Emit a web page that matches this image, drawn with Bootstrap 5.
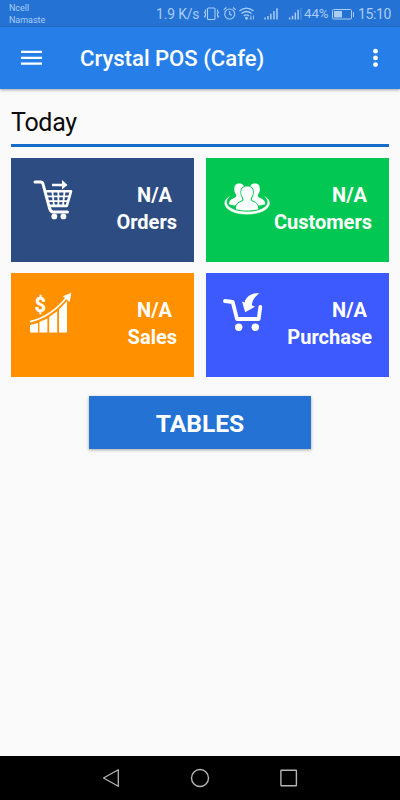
<!DOCTYPE html>
<html lang="en">
<head>
<meta charset="utf-8">
<meta name="viewport" content="width=device-width, initial-scale=1">
<title>Crystal POS (Cafe)</title>
<link href="https://cdn.jsdelivr.net/npm/bootstrap@5.3.0/dist/css/bootstrap.min.css" rel="stylesheet">
<style>
body{font-family:Roboto,"Liberation Sans",sans-serif;background:#fafafa;height:800px;overflow:hidden}
svg{display:block;flex:none}
.status{height:27px;background:#2472d3;color:#a9cdf5;padding-left:9px;white-space:nowrap}
.carrier{font-size:9px;line-height:12px;width:147px;padding-top:2px;letter-spacing:-.05px}
.rate{font-size:13.8px;width:47px;padding-top:1px;letter-spacing:-.1px}
.pct{font-size:13.4px;width:28px;padding-top:1px;letter-spacing:-.1px}
.clock{font-size:14px;padding-top:1px;letter-spacing:-.4px}
.appbar{height:62px;background:#267fe9;box-shadow:0 1px 3px rgba(0,0,0,.35);padding:0 18px 0 21px}
.apptitle{font-size:22.1px;font-weight:500;margin-left:38px;padding-top:1px;color:#fff;line-height:31px}
.content{padding:0 11px}
.heading{font-size:25px;letter-spacing:-.3px;line-height:30px;color:#0b0b0b;margin-top:19px;height:36px}
.rule{height:3px;background:#146bc9}
.tiles{display:grid;grid-template-columns:183px 183px;gap:11px 12px;margin-top:11px}
.tile{height:104px;color:#fff;font-size:20px;line-height:27px;font-weight:700;padding:24px 17px 0 17px}
.orders{background:#2d4d82}.customers{background:#02c853}.sales{background:#ff9100}.purchase{background:#3d5afe}
.value{padding-right:5px}
.tables{width:222px;height:53px;background:#2472d3;color:#fff;font-size:24.6px;line-height:36px;font-weight:700;margin-top:19px;box-shadow:0 1px 3px rgba(0,0,0,.35)}
.tables span{display:block;padding-top:2px}
.sysbar{height:44px;background:#000;padding:0 101px 0 101px}
</style>
<script src="https://cdn.jsdelivr.net/npm/bootstrap@5.3.0/dist/js/bootstrap.bundle.min.js"></script>
</head>
<body class="d-flex flex-column">
<div class="status d-flex align-items-center">
  <div class="carrier align-self-start">Ncell<br>Namaste</div>
  <span class="rate">1.9 K/s</span>
  <svg width="19" height="16" fill="none" stroke="#a9cdf5" stroke-width="1.1"><rect x="4.5" y="2" width="7.5" height="11.5" rx="1"/><path d="M2.500 3.500v2l-1 1 1 1v2l-1 1 1 1M14.500 3.500v2l1 1-1 1v2l1 1-1 1"/></svg>
  <svg width="17" height="16" fill="none" stroke="#a9cdf5" stroke-width="1.1"><circle cx="7.700" cy="8" r="5"/><path d="M7.700 5v3.300l2.200 1M1.700 3.900 4.400 1.500M11 1.500l2.700 2.400"/></svg>
  <svg width="25" height="16" fill="none" stroke="#a9cdf5" stroke-width="1.300"><path d="M.3 5Q7.500-.7 14.500 5M2.500 7.500Q7.500 3.500 12.500 7.500M4.700 9.900Q7.500 7.700 10.100 9.900"/><circle cx="7.500" cy="12.300" r=".8" fill="#a9cdf5"/><path d="M12 9.500v4M10.800 12.100l1.200 1.400M14.500 13.500v-4" stroke-width=".9"/></svg>
  <svg width="24" height="16" fill="#a9cdf5"><path d="M.3 11.500h1.500v2H.3zM3.200 10h1.500v3.500H3.200zM6.100 7.700h1.500v5.800H6.100zM9.200 4.900h1.500v8.600H9.200zM12.200 2.300h1.500v11.200h-1.500z"/></svg>
  <svg width="16" height="16" fill="#a9cdf5"><path d="M.9 11.500h1.500v2H.9zM3.800 9.700h1.500v3.800H3.800zM6.600 6.500h1.500v7H6.600zM9.400 3.800h1.500v9.700H9.400z"/><path opacity=".35" d="M12.300 2h1.200v11.500h-1.200z"/></svg>
  <span class="pct">44%</span>
  <svg width="26" height="16" fill="none" stroke="#a9cdf5" stroke-width="1"><rect x=".5" y="3.500" width="19" height="9.500" rx="1"/><path d="M2 5h8v6.500H2z" fill="#a9cdf5" stroke="none"/><path d="M21.500 6v5"/></svg>
  <span class="clock">15:10</span>
</div>
<nav class="appbar d-flex align-items-center">
  <svg width="21" height="16" fill="#fff"><path d="M0 .700h21v2.300H0zM0 6.700h21v2.300H0zM0 12.500h21v2.300H0z"/></svg>
  <div class="apptitle me-auto">Crystal POS (Cafe)</div>
  <svg width="12" height="20" fill="#fff"><circle cx="5.500" cy="3.200" r="2.400"/><circle cx="5.500" cy="9.900" r="2.400"/><circle cx="5.500" cy="16.600" r="2.400"/></svg>
</nav>
<main class="content flex-grow-1">
  <h1 class="heading fw-normal mb-0">Today</h1>
  <div class="rule"></div>
  <div class="tiles">
    <div class="tile orders d-flex justify-content-between">
      <svg width="46" height="46" viewBox="28 182 46 46" overflow="visible" fill="none" stroke="#fff" stroke-width="3" stroke-linecap="round" stroke-linejoin="round"><path d="M35 182h5.700q1.800 0 2.300 2l6.700 24.800q1 3.200 3.600 3.200H67.500"/><path d="M45.300 191.300H71l-4.200 14.600H50" stroke-width="2.600"/><path d="M47 196.300h22M48.500 201.200h19M52.400 191.500l1.500 14M58.400 191.500v14M64.500 191.500l-1.500 14" stroke-width="1.800"/><path d="M52 183.700h10V180l5.500 4.900-5.500 4.700v-3.400H52z" fill="#fff" stroke="none"/><g fill="#fff" stroke="none"><circle cx="54.300" cy="216.400" r="2.900"/><circle cx="63.400" cy="216.400" r="2.900"/></g></svg>
      <div class="text-end"><div class="value">N/A</div><div>Orders</div></div>
    </div>
    <div class="tile customers d-flex justify-content-between">
      <svg width="48" height="46" viewBox="223 182 48 46" overflow="visible" fill="#fff"><path d="M229.500 196.500c-3 1.800-4.800 4-4.800 6.700 0 6.200 9.700 11 22.400 11s22.400-4.800 22.400-11c0-2.700-1.800-4.900-4.800-6.700 2 1.800 3 3.500 3 5.500 0 5.700-9 9.700-20.600 9.700s-20.600-4-20.600-9.700c0-2 1-3.700 3-5.500z" stroke="#fff" stroke-width=".4"/><path d="M229 204.300c0-3.300 1.200-4.800 4-5.900 2.300-.9 3.500-1.500 3.300-3-.2-1.400-2-2.600-2-6.400s1.800-5.500 5-5.500 5 1.700 5 5.500-1.500 5-2 6.400V205c-4.500.8-9.800.7-13.300-.7z"/><path d="M265.200 204.300c0-3.300-1.200-4.800-4-5.900-2.300-.9-3.500-1.500-3.300-3 .2-1.400 2-2.600 2-6.400s-1.800-5.500-5-5.500-5 1.700-5 5.500 1.500 5 2 6.400V205c4.500.8 9.800.7 13.300-.7z"/><path d="M235.900 209.200c0-4.300 1.800-6.200 5.300-7.500 2-.8 2.400-1.500 2.200-2.800-.3-1.700-2.200-2.700-2.200-6.800 0-3.600 2.200-5.500 5.900-5.500s5.900 1.900 5.900 5.500c0 4.100-1.900 5.100-2.200 6.800-.2 1.300.2 2 2.200 2.800 3.500 1.300 5.300 3.200 5.300 7.500-5.600 1.700-16.800 1.700-22.400 0z" stroke="#02c853" stroke-width="1.800" paint-order="stroke"/></svg>
      <div class="text-end"><div class="value">N/A</div><div>Customers</div></div>
    </div>
    <div class="tile sales d-flex justify-content-between">
      <svg width="46" height="46" viewBox="28 297 46 46" overflow="visible" fill="#fff"><path d="M30 325l8-2v9.500h-8zM39.400 322l8-3.600v14.100h-8zM49.200 317l8-5.700v21.200h-8zM59 309.400l8-8.500v31.600h-8z"/><path d="M30 321.700C44 318.500 56 310.600 67 297" fill="none" stroke="#fff" stroke-width="1.700"/><path d="M71.300 292.800l-8.300 3.500 6.700 6z"/><text x="40.300" y="311.800" text-anchor="middle" font-size="19.500" font-family="Roboto, sans-serif" font-weight="700" stroke="#fff" stroke-width=".3">$</text></svg>
      <div class="text-end"><div class="value">N/A</div><div>Sales</div></div>
    </div>
    <div class="tile purchase d-flex justify-content-between">
      <svg width="46" height="46" viewBox="223 297 46 46" overflow="visible" fill="none" stroke="#fff" stroke-width="3.800" stroke-linecap="round" stroke-linejoin="round"><path d="M225 301l7.700 1 4.300 17h21.700l1.600-12"/><g fill="#fff" stroke="none"><circle cx="238.700" cy="327.300" r="3.700"/><circle cx="255.300" cy="327.300" r="3.700"/><path d="M259.500 293.200c-7.500-.3-13 2.500-15 9.200l-2.500-1 3.200 10.900 9.800-5.600-3.200-1.400c.5-5.300 3-8.500 7.700-12.100z"/></g></svg>
      <div class="text-end"><div class="value">N/A</div><div>Purchase</div></div>
    </div>
  </div>
  <button class="tables btn rounded-0 border-0 p-0 d-block mx-auto"><span>TABLES</span></button>
</main>
<div class="sysbar d-flex align-items-center justify-content-between">
  <svg width="20" height="22" fill="none" stroke="#b5b5b5" stroke-width="1.300" stroke-linejoin="round"><path d="M17.300 2.700v16.600L2.500 11z"/></svg>
  <svg width="20" height="22" fill="none" stroke="#b5b5b5" stroke-width="1.400"><circle cx="10" cy="11" r="8.500"/></svg>
  <svg width="20" height="22" fill="none" stroke="#b5b5b5" stroke-width="1.400"><rect x="1.900" y="3.200" width="15.500" height="15.500" rx=".5"/></svg>
</div>
</body>
</html>
